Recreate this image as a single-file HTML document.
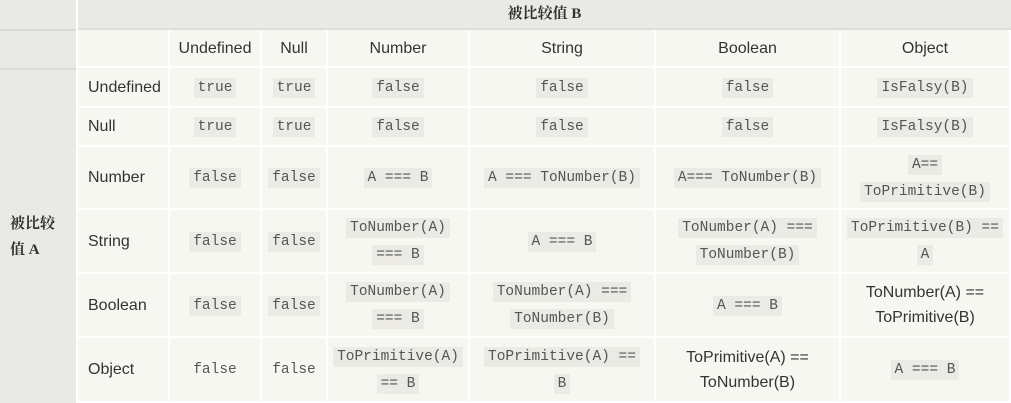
<!DOCTYPE html><html><head><meta charset="utf-8"><style>
*{margin:0;padding:0;box-sizing:border-box}
body{width:1011px;height:403px;background:#f7f7f2;font-family:"Liberation Sans","Noto Sans CJK SC",sans-serif;color:#333;font-size:16px;position:relative;overflow:hidden}
.left{position:absolute;left:0;top:0;width:78px;height:403px;background:#e9eae6;border-right:2px solid #fff}
.l1{position:absolute;left:0;width:76px;height:2px;background:#d9dcd8}
.hb{position:absolute;left:78px;top:0;width:933px;height:30px;background:#e9eae6;border-bottom:2px solid #dcdfdb;text-align:center;font-weight:bold;font-family:"Liberation Serif","Noto Serif CJK SC",serif;font-size:15px;line-height:28px}
.a{position:absolute;left:10px;top:211px;font-weight:bold;font-family:"Liberation Serif","Noto Serif CJK SC",serif;font-size:15px;line-height:26px}
.g{position:absolute;left:78px;top:30px;display:grid;grid-template-columns:92px 92px 66px 142px 186px 185px 170px;grid-template-rows:38px 40px 39px 63px 64px 64px 65px}
.g>div{border-right:2px solid #fff;border-bottom:2px solid #fff;display:flex;align-items:center;justify-content:center;text-align:center;line-height:25px;padding:0 4px}
.g>div.r{justify-content:flex-start;padding-left:10px}
.g>div>span{display:block}
code{font-family:"Liberation Mono","DejaVu Sans Mono",monospace;font-size:14.5px;background:#ebeae5;color:#555;padding:2px 4px}
</style></head><body>
<div class="left"><div class="l1" style="top:29px"></div><div class="l1" style="top:68px"></div></div>
<div class="hb">被比较值 B</div>
<div class="a">被比较<br>值 A</div>
<div class="g">
<div></div><div>Undefined</div><div>Null</div><div>Number</div><div>String</div><div>Boolean</div><div>Object</div>
<div class="r">Undefined</div><div><span><code>true</code></span></div><div><span><code>true</code></span></div><div><span><code>false</code></span></div><div><span><code>false</code></span></div><div><span><code>false</code></span></div><div><span><code>IsFalsy(B)</code></span></div>
<div class="r">Null</div><div><span><code>true</code></span></div><div><span><code>true</code></span></div><div><span><code>false</code></span></div><div><span><code>false</code></span></div><div><span><code>false</code></span></div><div><span><code>IsFalsy(B)</code></span></div>
<div class="r">Number</div><div><span><code>false</code></span></div><div><span><code>false</code></span></div><div><span><code>A === B</code></span></div><div><span><code>A === ToNumber(B)</code></span></div><div><span><code>A=== ToNumber(B)</code></span></div><div><span><code>A==</code><br><code>ToPrimitive(B)</code></span></div>
<div class="r">String</div><div><span><code>false</code></span></div><div><span><code>false</code></span></div><div><span><code>ToNumber(A)</code><br><code>=== B</code></span></div><div><span><code>A === B</code></span></div><div><span><code>ToNumber(A) ===</code><br><code>ToNumber(B)</code></span></div><div><span><code>ToPrimitive(B) ==</code><br><code>A</code></span></div>
<div class="r">Boolean</div><div><span><code>false</code></span></div><div><span><code>false</code></span></div><div><span><code>ToNumber(A)</code><br><code>=== B</code></span></div><div><span><code>ToNumber(A) ===</code><br><code>ToNumber(B)</code></span></div><div><span><code>A === B</code></span></div><div><span>ToNumber(A) ==<br>ToPrimitive(B)</span></div>
<div class="r">Object</div><div><span><code style="background:none">false</code></span></div><div><span><code style="background:none">false</code></span></div><div><span><code>ToPrimitive(A)</code><br><code>== B</code></span></div><div><span><code>ToPrimitive(A) ==</code><br><code>B</code></span></div><div><span>ToPrimitive(A) ==<br>ToNumber(B)</span></div><div><span><code>A === B</code></span></div>
</div>
</body></html>
